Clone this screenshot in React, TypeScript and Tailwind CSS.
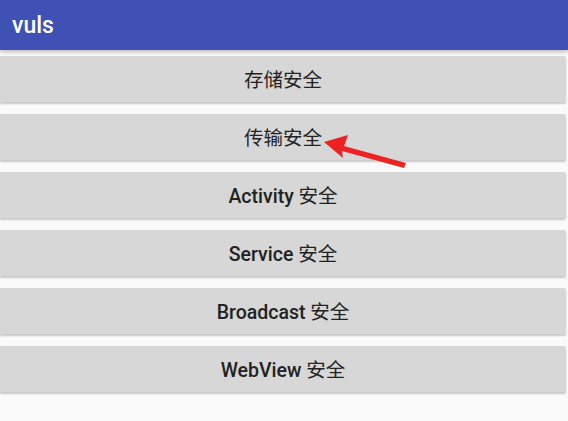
import React from "react";

const items = [
  ["", "存储安全"],
  ["", "传输安全"],
  ["Activity ", "安全"],
  ["Service ", "安全"],
  ["Broadcast ", "安全"],
  ["WebView ", "安全"],
];

const font = { fontFamily: "Roboto, 'Noto Sans CJK SC', sans-serif" };

export default function App() {
  return (
    <div className="relative w-[568px] h-[421px] overflow-hidden bg-[#fafafa]" style={font}>
      <div className="h-[50px] bg-[#3f51b5] flex items-center pl-[12px] shadow-[0_2px_4px_rgba(0,0,0,0.25)] relative z-10">
        <span className="text-white text-[23px] font-medium leading-none">vuls</span>
      </div>
      <div className="flex flex-col gap-[12px] pt-[6px] pr-[2px]">
        {items.map(([en, zh]) => (
          <div
            key={en + zh}
            className="h-[46px] pt-[3px] bg-[#d6d7d6] rounded-r-[2px] shadow-[0_2px_2px_rgba(0,0,0,0.2)] flex items-center justify-center text-[19.5px] text-[#222222] whitespace-pre"
          >
            {en && <span className="font-medium">{en}</span>}
            <span className="font-normal">{zh}</span>
          </div>
        ))}
      </div>
      <svg className="absolute left-0 top-0 pointer-events-none" width="568" height="421">
        <polygon
          points="324,142 348,135 344,146 406,163 404,168 342,151 343,158"
          fill="#ee2222"
        />
      </svg>
    </div>
  );
}
